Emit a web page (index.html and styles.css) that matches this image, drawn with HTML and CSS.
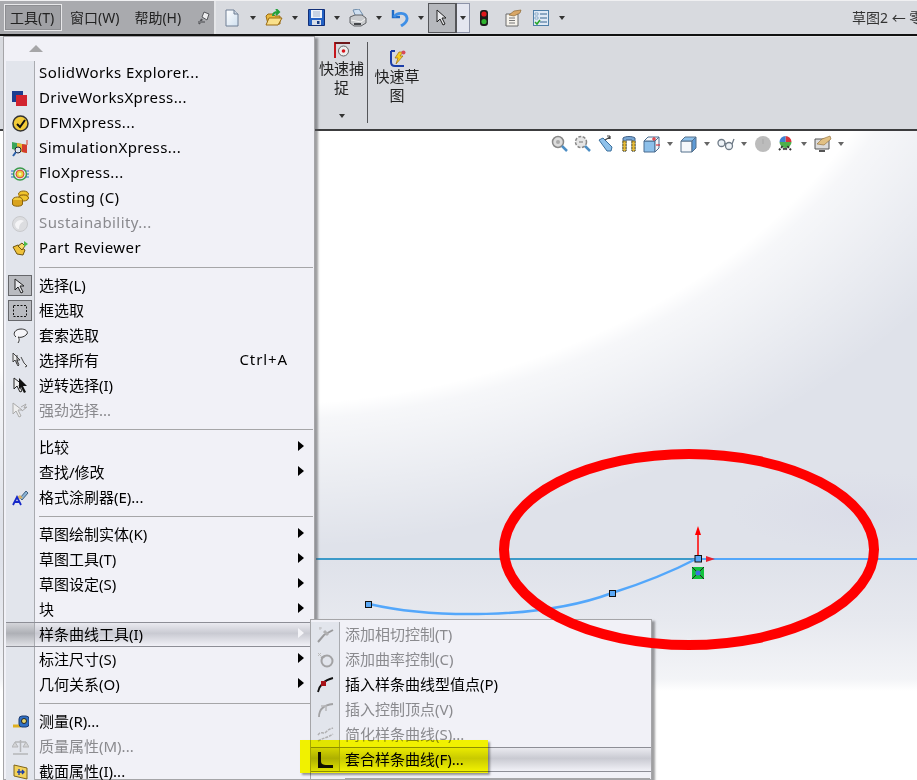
FILE: index.html
```html
<!DOCTYPE html>
<html lang="zh-CN">
<head>
  <meta charset="UTF-8" />
  <title>草图2</title>
  <link rel="stylesheet" href="styles.css">
</head>
<body>
  <div class="topbar">
    <div class="menubar">
      <span class="menu-title active">工具(T)</span>
      <span class="menu-title">窗口(W)</span>
      <span class="menu-title">帮助(H)</span>
      <svg class="pin" width="14" height="16" viewBox="0 0 14 16"><path d="M7 2l5 2-2 6-5-3z" fill="#ececee" stroke="#55565a"/><path d="M5 9L2 14" stroke="#55565a" stroke-width="2"/><path d="M1 12h7" stroke="#77787c" stroke-width="2"/></svg>
    </div>
    <div class="tools">
      <span class="tool"><svg width="16" height="18" viewBox="0 0 16 18"><defs><linearGradient id="page" x1="0" y1="0" x2="1" y2="1"><stop offset="0" stop-color="#ffffff"/><stop offset="1" stop-color="#cfe0f0"/></linearGradient></defs><path d="M2 1h8l4 4v12H2z" fill="url(#page)" stroke="#6f7f94"/><path d="M10 1v4h4" fill="#c9d3df" stroke="#6f7f94"/></svg></span>
      <span class="caret"></span>
      <span class="tool"><svg width="18" height="18" viewBox="0 0 18 18"><path d="M1 7l2-2h5l2 2h5v8H3z" fill="#e9b93f" stroke="#9a6b12"/><path d="M1 16l3-7h13l-4 7z" fill="#f9e08a" stroke="#9a6b12"/><path d="M8 7c0-3 2-4 5-4M11 0l3 3-3 3" fill="none" stroke="#22a03a" stroke-width="2"/></svg></span>
      <span class="caret"></span>
      <span class="tool"><svg width="17" height="17" viewBox="0 0 17 17"><path d="M.5.500h16v16H.5z" fill="#2462c4" stroke="#122f78"/><path d="M3 1h11v8H3z" fill="#eef3fa"/><path d="M5 3h7M5 5h7M5 7h7" stroke="#9fb3cf"/><path d="M4 11h9v5H4z" fill="#d8dee8"/><path d="M9 12h2.500v3H9z" fill="#173d86"/></svg></span>
      <span class="caret"></span>
      <span class="tool"><svg width="18" height="18" viewBox="0 0 18 18"><path d="M4 1l6-1 4 6-7 2z" fill="#cfe0f2" stroke="#6f8dab"/><path d="M1 8l5-2h7l4 3v5l-5 3H5l-4-3z" fill="#c9cbce" stroke="#5f6165"/><path d="M2 11l10 2 4-3" fill="none" stroke="#f4f4f4"/><path d="M5 15l7 0" stroke="#44464a" stroke-width="2"/></svg></span>
      <span class="caret"></span>
      <span class="tool"><svg width="18" height="18" viewBox="0 0 18 18"><path d="M2 1v7h7" fill="none" stroke="#1f6cc8" stroke-width="2.400"/><path d="M3 8c3-5 12-5 13 1 .6 4-3 6-6 8" fill="none" stroke="#3f8fe6" stroke-width="2.800"/></svg></span>
      <span class="caret"></span>
      <span class="split">
        <span class="split-main"><svg width="12" height="17" viewBox="0 0 12 17"><path d="M1 1v12l3-3 3 6 2-1-3-6h4z" fill="#e8e9ec" stroke="#222"/></svg></span>
        <span class="split-side"><span class="caret"></span></span>
      </span>
      <span class="tool light"><svg width="10" height="18" viewBox="0 0 10 18"><rect x="1" y="1" width="8" height="16" rx="3" fill="#1b1b1b"/><circle cx="5" cy="5" r="2.600" fill="#e0181c"/><circle cx="5" cy="12.500" r="2.600" fill="#2fb52f"/></svg></span>
      <span class="tool"><svg width="18" height="18" viewBox="0 0 18 18"><path d="M2 5h12v12H2z" fill="#f6f3ec" stroke="#6b6b6b"/><path d="M5 9h6M5 11.500h6M5 14h6" stroke="#777"/><path d="M5 6l5-4 7-1-1 3-6 3z" fill="#d9a766" stroke="#8d6a36" stroke-width=".7"/></svg></span>
      <span class="tool check"><svg width="16" height="16" viewBox="0 0 16 16"><rect x=".5" y=".5" width="15" height="15" fill="#dfe9f5" stroke="#4f7fa8"/><path d="M2 3h3v2H2zM2 7h3v2H2z" fill="#fff" stroke="#4f7fa8" stroke-width=".6"/><path d="M7 4h7M7 8h7M7 12h7" stroke="#37658f"/><path d="M2 12l2 2 3-4" fill="none" stroke="#24a524" stroke-width="1.500"/></svg></span>
      <span class="caret wide"></span>
    </div>
    <div class="title">草图2 ← 零件1</div>
  </div>

  <div class="ribbon">
    <div class="rb-btn">
      <svg width="16" height="17" viewBox="0 0 16 17"><path d="M1 16V1h15" fill="none" stroke="#c3161c" stroke-width="2"/><path d="M1 1h15" stroke="#1a1a1a"/><circle cx="9.500" cy="9" r="5" fill="#eee" stroke="#666"/><circle cx="9.500" cy="9" r="1.800" fill="#d8141a"/></svg>
      <span>快速捕捉</span>
      <span class="caret small"></span>
    </div>
    <div class="rb-sep"></div>
    <div class="rb-btn second">
      <svg width="17" height="17" viewBox="0 0 17 17"><path d="M2 1h4M2 1v11c0 3 2 4 4 4h9" fill="none" stroke="#1b3ea8" stroke-width="2"/><path d="M10 2l4 0-3 4h3l-7 8 2-6H6z" fill="#f6cf22" stroke="#a06d10" stroke-width=".7"/><circle cx="14.500" cy="2.500" r="2" fill="#d84a5a"/></svg>
      <span>快速草图</span>
    </div>
  </div>

  <div class="canvas">
    <div class="hud">
      <span class="hud-ico"><svg width="18" height="18" viewBox="0 0 18 18"><circle cx="7" cy="7" r="5.500" fill="#dcdcdc" stroke="#888" stroke-width="1.500"/><circle cx="7" cy="7" r="2" fill="#aaa"/><path d="M11 11l5 5" stroke="#4d8ec4" stroke-width="2.500"/></svg></span>
      <span class="hud-ico"><svg width="18" height="18" viewBox="0 0 18 18"><circle cx="7" cy="7" r="5.500" fill="#e6e6e6" stroke="#888" stroke-width="1.500" stroke-dasharray="3 1.500"/><path d="M5 7h4" stroke="#777"/><path d="M11 11l5 5" stroke="#4d8ec4" stroke-width="2.500"/></svg></span>
      <span class="hud-ico"><svg width="18" height="18" viewBox="0 0 18 18"><path d="M2 5l4-2 9 9-1 4-4 0z" fill="#8fc1ea" stroke="#3b6f9c"/><path d="M8 5l5-3M13 1l-3 0M13 1v3" fill="none" stroke="#444" stroke-width="1.200"/></svg></span>
      <span class="hud-ico"><svg width="16" height="18" viewBox="0 0 16 18"><path d="M2 3c2-2 10-2 12 0v13h-3V5H5v11H2z" fill="#78a6d4" stroke="#3f5f85"/><path d="M2 6h3v10H2zM11 6h3v10h-3z" fill="#e5bb3a" stroke="#7a6420" stroke-dasharray="2 1"/></svg></span>
      <span class="hud-ico"><svg width="17" height="18" viewBox="0 0 17 18"><path d="M1 6h11v11H1z" fill="#8dc0ea" stroke="#4a6d90"/><path d="M1 6l4-4h11l-4 4zM12 6l4-4v11l-4 4z" fill="#f4f6f9" stroke="#4a6d90"/><path d="M9 4h4M11 2v4M13 10h4" stroke="#d8141a"/></svg></span>
      <span class="caret hud-caret"></span>
      <span class="hud-ico"><svg width="17" height="18" viewBox="0 0 17 18"><path d="M1 6h11v11H1z" fill="#f4f7fb" stroke="#55708c"/><path d="M1 6l4-4h11l-4 4z" fill="#8dc0ea" stroke="#55708c"/><path d="M12 6l4-4v11l-4 4z" fill="#5d9ad6" stroke="#55708c"/></svg></span>
      <span class="caret hud-caret"></span>
      <span class="hud-ico"><svg width="18" height="14" viewBox="0 0 18 14"><circle cx="4.500" cy="6" r="3.500" fill="#eef3f8" stroke="#6e7a86" stroke-width="1.300"/><circle cx="12" cy="9" r="3.500" fill="#eef3f8" stroke="#6e7a86" stroke-width="1.300"/><path d="M7.500 6l1.500 1M15 7l2-5" stroke="#6e7a86" stroke-width="1.300" fill="none"/></svg></span>
      <span class="caret hud-caret"></span>
      <span class="hud-ico"><svg width="16" height="16" viewBox="0 0 16 16"><circle cx="8" cy="8" r="8" fill="#bcbcbc"/><path d="M8 8V3" stroke="#a8a8a8"/></svg></span>
      <span class="hud-ico"><svg width="17" height="18" viewBox="0 0 17 18"><path d="M8.500 1a6 6 0 0 1 6 6h-6z" fill="#d8343a"/><path d="M8.500 1a6 6 0 0 0-6 6h6z" fill="#3d7fd0"/><path d="M2.500 7a6 6 0 0 0 12 0z" fill="#4db04a"/><path d="M2 15l3-3 3 3 3-3 3 3" fill="none" stroke="#333" stroke-width="2" stroke-dasharray="2 1"/></svg></span>
      <span class="caret hud-caret"></span>
      <span class="hud-ico"><svg width="18" height="18" viewBox="0 0 18 18"><path d="M1 4h14v10H1z" fill="#dcdcdc" stroke="#555"/><path d="M3 9l5-5 8-3 1 3-7 6z" fill="#e1c083" stroke="#8d6a36" stroke-width=".6"/><path d="M5 16h6" stroke="#555" stroke-width="2"/></svg></span>
      <span class="caret hud-caret"></span>
    </div>
    <svg class="sketch" width="601" height="649" viewBox="316 131 601 649">
      <path d="M316 559H698" stroke="#3c9ac9" stroke-width="2" fill="none"/>
      <path d="M698 559H917" stroke="#53a7fb" stroke-width="2" fill="none"/>
      <path d="M369 604C430 618 540 620 612 593C650 581 675 570 698 558" stroke="#53a7fb" stroke-width="2.500" fill="none"/>
      <path d="M698 556V530" stroke="#f00" stroke-width="1.500"/>
      <path d="M698 526l3 9h-6z" fill="#f00"/>
      <path d="M706 556l9 3-9 3z" fill="#e8212e"/>
      <rect x="365.500" y="601.500" width="6" height="6" fill="#5aa8f5" stroke="#111"/>
      <rect x="609.500" y="590.500" width="6" height="6" fill="#5aa8f5" stroke="#111"/>
      <rect x="695" y="555.500" width="6.500" height="6.500" fill="#5aa8f5" stroke="#111"/>
      <rect x="692" y="567" width="12" height="12" fill="#12c23c"/>
      <path d="M692 579l12-12M692 567l12 12" stroke="#222"/>
      <circle cx="698" cy="573" r="2.500" fill="#3b6fe0"/>
    </svg>
  </div>

  <div class="menu">
    <div class="scroll-up"><span></span></div>
    <div class="menu-list">
      <div class="item"><span class="ico"></span><span class="label en">SolidWorks Explorer...</span></div>
      <div class="item"><span class="ico"><svg width="16" height="16" viewBox="0 0 16 16"><rect x="0" y="0" width="11" height="11" fill="#1c3d8f"/><rect x="4" y="4" width="11" height="11" fill="#d2242f"/></svg></span><span class="label en">DriveWorksXpress...</span></div>
      <div class="item"><span class="ico"><svg width="17" height="17" viewBox="0 0 17 17"><circle cx="8.500" cy="8.500" r="7.500" fill="#f2cb38" stroke="#333" stroke-width="1.500"/><path d="M5 9l3 3 5-7" fill="none" stroke="#111" stroke-width="2"/></svg></span><span class="label en">DFMXpress...</span></div>
      <div class="item"><span class="ico"><svg width="18" height="17" viewBox="0 0 18 17"><path d="M1 2l15 3v8L1 9z" fill="#3aa55a"/><path d="M6 3l10 2v8L6 11z" fill="#e9b52f"/><path d="M11 4l5 1v8l-5-1z" fill="#d43a2c"/><circle cx="7" cy="10" r="3" fill="#dfe6ee" stroke="#223"/><path d="M5 12l-3 4" stroke="#2a5fa8" stroke-width="2"/><path d="M16 0v5" stroke="#d43a2c"/></svg></span><span class="label en">SimulationXpress...</span></div>
      <div class="item"><span class="ico"><svg width="18" height="14" viewBox="0 0 18 14"><ellipse cx="9" cy="7" rx="6.500" ry="6" fill="none" stroke="#3a9a4a" stroke-width="1.500"/><ellipse cx="9" cy="7" rx="4" ry="3.800" fill="#e8d13a" stroke="#d8453a"/><circle cx="9" cy="7" r="1.500" fill="#f7f2b0"/><path d="M0 4h3M0 7h2M0 10h3M15 4h3M16 7h2M15 10h3" stroke="#2f6fc4"/></svg></span><span class="label en">FloXpress...</span></div>
      <div class="item"><span class="ico"><svg width="17" height="17" viewBox="0 0 17 17"><ellipse cx="11.500" cy="4" rx="5" ry="3" fill="#f0c52e" stroke="#8a6410"/><path d="M6.500 4v4h10V4" fill="#d9a31e"/><ellipse cx="11.500" cy="8" rx="5" ry="3" fill="#f0c52e" stroke="#8a6410"/><ellipse cx="5.500" cy="10" rx="5" ry="3" fill="#f3cf40" stroke="#8a6410"/><path d="M.5 10v4c0 3 10 3 10 0v-4" fill="#d9a31e" stroke="#8a6410"/></svg></span><span class="label en">Costing (C)</span></div>
      <div class="item off"><span class="ico"><svg width="16" height="16" viewBox="0 0 16 16"><circle cx="8" cy="8" r="7.500" fill="#dcdde0" stroke="#c8c9cc"/><path d="M3 8c2-4 6-5 9-3-2 1-5 3-5 8-2 0-4-2-4-5z" fill="#f4f4f6"/></svg></span><span class="label en">Sustainability...</span></div>
      <div class="item"><span class="ico"><svg width="17" height="17" viewBox="0 0 17 17"><path d="M1 7l5-2 7 5-2 5-6-1z" fill="#efc23a" stroke="#6d5210"/><path d="M6 6l4-3 3 3-3 4z" fill="#f7da6a" stroke="#6d5210"/><path d="M12 1l4 3-4 3z" fill="#4cbb4c"/></svg></span><span class="label en">Part Reviewer</span></div>
      <div class="sep"></div>
      <div class="item"><span class="ico"><span class="pressed"><svg width="12" height="16" viewBox="0 0 12 16"><path d="M1 1v11l3-3 3 6 2-1-3-6h4z" fill="#e8e9ec" stroke="#222"/></svg></span></span><span class="label">选择(L)</span></div>
      <div class="item"><span class="ico"><span class="pressed"><svg width="16" height="14" viewBox="0 0 16 14"><rect x="1.500" y="1.500" width="13" height="11" fill="none" stroke="#111" stroke-dasharray="2 1.500"/></svg></span></span><span class="label">框选取</span></div>
      <div class="item"><span class="ico"><svg width="17" height="17" viewBox="0 0 17 17"><path d="M4 10C0 7 3 2 9 2s8 4 5 6c-2 2-6 3-8 2 1 1 2 3 0 6" fill="#f5f5f8" stroke="#333"/></svg></span><span class="label">套索选取</span></div>
      <div class="item"><span class="ico"><svg width="16" height="17" viewBox="0 0 16 17"><path d="M1 1v9l2-2 3 6 1-1-2-5h3zM5 3v9M9 5l3 6 3 3-2 1" fill="#eee" stroke="#333" stroke-width=".9"/></svg></span><span class="label">选择所有</span><span class="key">Ctrl+A</span></div>
      <div class="item"><span class="ico"><svg width="15" height="17" viewBox="0 0 15 17"><path d="M1 1v11l3-3 3 6 2-1-3-6h4z" fill="#eee" stroke="#222"/><path d="M6 1l8 8h-4l3 6-2 1-3-6-2 2z" fill="#111"/></svg></span><span class="label">逆转选择(I)</span></div>
      <div class="item off"><span class="ico"><svg width="16" height="17" viewBox="0 0 16 17"><path d="M1 1v11l3-3 3 6 2-1-3-6h4z" fill="#eee" stroke="#aaa"/><path d="M9 5l5-3-2 4 3-1-5 4" fill="none" stroke="#aaa"/></svg></span><span class="label">强劲选择...</span></div>
      <div class="sep"></div>
      <div class="item"><span class="ico"></span><span class="label">比较</span><span class="arrow"></span></div>
      <div class="item"><span class="ico"></span><span class="label">查找/修改</span><span class="arrow"></span></div>
      <div class="item"><span class="ico"><svg width="17" height="17" viewBox="0 0 17 17"><path d="M8 9l6-7 2 2-6 7z" fill="#8ab3d6" stroke="#44627f"/><path d="M7 10l-2-2 3-2 3 3z" fill="#d8b36a"/><path d="M1 16l4-8 4 8M3 13h4" fill="none" stroke="#1628c8" stroke-width="1.800"/></svg></span><span class="label">格式涂刷器(E)...</span></div>
      <div class="sep"></div>
      <div class="item"><span class="ico"></span><span class="label">草图绘制实体(K)</span><span class="arrow"></span></div>
      <div class="item"><span class="ico"></span><span class="label">草图工具(T)</span><span class="arrow"></span></div>
      <div class="item"><span class="ico"></span><span class="label">草图设定(S)</span><span class="arrow"></span></div>
      <div class="item"><span class="ico"></span><span class="label">块</span><span class="arrow"></span></div>
      <div class="item hot"><span class="ico"></span><span class="label">样条曲线工具(I)</span><span class="arrow"></span></div>
      <div class="item"><span class="ico"></span><span class="label">标注尺寸(S)</span><span class="arrow"></span></div>
      <div class="item"><span class="ico"></span><span class="label">几何关系(O)</span><span class="arrow"></span></div>
      <div class="sep"></div>
      <div class="item"><span class="ico"><svg width="17" height="14" viewBox="0 0 17 14"><path d="M1 11h8" stroke="#e0b020" stroke-width="3"/><rect x="7" y="1" width="10" height="11" rx="3" fill="#2f6fc4" stroke="#1a3a70"/><circle cx="12" cy="6" r="2.500" fill="#e8d66a" stroke="#222"/></svg></span><span class="label">测量(R)...</span></div>
      <div class="item off"><span class="ico"><svg width="17" height="16" viewBox="0 0 17 16"><path d="M8.500 1v12M3 3h11M1 15h15" stroke="#b5b6b8" stroke-width="1.500"/><path d="M0 8l3-5 3 5zM11 8l3-5 3 5z" fill="#d3d4d6" stroke="#b5b6b8"/></svg></span><span class="label">质量属性(M)...</span></div>
      <div class="item"><span class="ico"><svg width="15" height="16" viewBox="0 0 15 16"><path d="M1 1l13 3v11L1 12z" fill="#f2d25a" stroke="#80651a"/><path d="M4 8h7M9 6l2 2-2 2M6 5v6" fill="none" stroke="#1b3ea8" stroke-width="1.300"/></svg></span><span class="label">截面属性(I)...</span></div>
    </div>
  </div>

  <div class="menu submenu">
    <div class="item off"><span class="ico"><svg width="17" height="17" viewBox="0 0 17 17"><path d="M1 16l6-7 9-5" fill="none" stroke="#9a9a9c" stroke-width="2"/><path d="M7 5l4 4" stroke="#b0b0b2" stroke-width="3"/><path d="M2 2h3M3 1v3" stroke="#c0c0c2"/></svg></span><span class="label">添加相切控制(T)</span></div>
    <div class="item off"><span class="ico"><svg width="17" height="17" viewBox="0 0 17 17"><circle cx="10" cy="10" r="5.500" fill="none" stroke="#a2a2a4" stroke-width="2"/><path d="M1 2l3 3M4 2L1 5" stroke="#bbb"/><path d="M4 7l4-2" stroke="#a2a2a4" stroke-width="2"/></svg></span><span class="label">添加曲率控制(C)</span></div>
    <div class="item"><span class="ico"><svg width="17" height="17" viewBox="0 0 17 17"><path d="M1 16c1-6 6-12 15-14" fill="none" stroke="#111" stroke-width="1.800"/><rect x="4" y="5" width="5" height="5" fill="#a8141a"/></svg></span><span class="label">插入样条曲线型值点(P)</span></div>
    <div class="item off"><span class="ico"><svg width="17" height="17" viewBox="0 0 17 17"><path d="M2 16c0-7 4-12 14-13" fill="none" stroke="#a2a2a4" stroke-width="1.800"/><path d="M4 5h5v5" fill="none" stroke="#b8b8ba" stroke-width="1.500"/></svg></span><span class="label">插入控制顶点(V)</span></div>
    <div class="item off"><span class="ico"><svg width="17" height="15" viewBox="0 0 17 15"><path d="M1 8c3-5 5 0 8-3s4-3 7-4M1 14c5-3 9-3 15-7" fill="none" stroke="#b0b0b2" stroke-width="1.500" stroke-dasharray="3 1"/></svg></span><span class="label">简化样条曲线(S)...</span></div>
    <div class="item hot"><span class="ico"><svg width="16" height="16" viewBox="0 0 16 16"><path d="M1 0h3v9c0 3 2 4 5 4h7v3H1z" fill="#111"/></svg></span><span class="label">套合样条曲线(F)...</span></div>
    <div class="sub-sep"></div>
  </div>

  <div class="marker"></div>
  <svg class="ring" width="400" height="220" viewBox="489 440 400 220"><ellipse cx="689" cy="549.500" rx="185" ry="95.500" fill="none" stroke="#f00" stroke-width="10"/></svg>
</body>
</html>
```

FILE: styles.css
```css
* {
  box-sizing: border-box;
}
html, body {
  height: 100%;
}
body {
  margin: 0;
  overflow: hidden;
  display: flex;
  flex-direction: column;
  background: #fff;
  color: #000;
  font-family: "Noto Sans", "Noto Sans CJK SC", sans-serif;
  font-size: 15px;
}
svg {
  display: block;
}

/* top row */
.topbar {
  flex: none;
  height: 36px;
  display: flex;
  background: #d8dadf;
  border-top: 1px solid #f0f0f2;
  border-bottom: 2px solid #111;
  white-space: nowrap;
}
.menubar {
  flex: none;
  width: 216px;
  display: flex;
  align-items: center;
  padding-left: 4px;
  background: #a9aaae;
  border-right: 2px solid #e4e5e8;
}
.menu-title {
  height: 27px;
  line-height: 25px;
  padding: 0 4px;
  margin-left: 3px;
  color: #222;
  font-size: 14px;
  border: 1px solid transparent;
}
.menu-title.active {
  width: 58px;
  margin-left: 0;
  padding: 0 5px;
  border-color: #e8e8ea;
  outline: 1px solid #8d8e92;
  outline-offset: -2px;
  background: #a0a1a5;
}
.menu-title + .menu-title + .menu-title {
  margin-left: 5px;
}
.pin {
  margin-left: 11px;
}
.tools {
  flex: none;
  display: flex;
  align-items: center;
}
.tool {
  flex: none;
  width: 32px;
  display: flex;
  justify-content: center;
}
.tool.light {
  width: 26px;
  margin-left: 1px;
}
.tool.check {
  width: 24px;
}
.caret {
  flex: none;
  width: 10px;
  height: 4px;
  position: relative;
}
.caret::after {
  content: "";
  position: absolute;
  left: 2px;
  top: 0;
  border: 3px solid transparent;
  border-top: 4px solid #333;
  border-bottom: 0;
}
.caret.wide {
  width: 18px;
}
.caret.wide::after {
  left: 6px;
}
.split {
  flex: none;
  display: flex;
  height: 30px;
  margin-left: 2px;
}
.split-main {
  width: 29px;
  display: flex;
  align-items: center;
  justify-content: center;
  background: #b6b8bd;
  border: 1px solid #55565a;
  border-width: 1px 2px 1px 1px;
}
.split-side {
  width: 13px;
  display: flex;
  align-items: center;
  justify-content: center;
  background: #e4e6f0;
  border: 1px solid #8d93a8;
  border-left: 0;
}
.split-side .caret {
  width: 8px;
}
.split-side .caret::after {
  left: 1px;
}
.title {
  flex: none;
  margin-left: 281px;
  line-height: 33px;
  font-size: 14px;
  color: #333;
}

/* command band */
.ribbon {
  flex: none;
  height: 95px;
  display: flex;
  padding: 5px 0 0 318px;
  background: #d8dadf;
  border-bottom: 2px solid #3c3c3e;
  border-top: 1px solid #e6e7ea;
}
.rb-btn {
  width: 47px;
  display: flex;
  flex-direction: column;
  align-items: center;
  text-align: center;
  line-height: 19px;
  color: #222;
}
.rb-btn .caret.small {
  margin-top: 17px;
  width: 8px;
}
.rb-btn .caret.small::after {
  left: 1px;
}
.rb-btn.second {
  margin-left: 4px;
  padding-top: 8px;
  width: 50px;
}
.rb-sep {
  width: 1px;
  height: 81px;
  margin-left: 2px;
  background: #55565a;
}

/* graphics area */
.canvas {
  flex: 1;
  position: relative;
  background:
    radial-gradient(ellipse 700px 535px at 250px -250px, #fff 98%, rgba(255, 255, 255, .72) 101%, rgba(255, 255, 255, 0) 125%),
    radial-gradient(ellipse 130px 40px at 860px 380px, #dbdde8, rgba(219, 221, 232, 0)),
    linear-gradient(#dfe2ea 430px, #e7e9ef 490px, #f3f4f7 548px, #fff 560px);
}
.hud {
  display: flex;
  align-items: center;
  height: 26px;
  padding-left: 548px;
}
.hud-ico {
  flex: none;
  width: 23px;
  display: flex;
  justify-content: center;
}
.hud-caret {
  width: 14px;
}
.hud-caret::after {
  left: 4px;
  border-top-color: #666;
}
.sketch {
  position: absolute;
  left: 316px;
  top: 0;
}

/* drop-down menu */
.menu {
  position: absolute;
  left: 3px;
  top: 36px;
  width: 312px;
  height: 744px;
  background: #f1f1f7;
  border: 1px solid #a5a5a8;
  box-shadow: 3px 2px 2px rgba(80, 80, 84, .55);
}
.scroll-up {
  height: 24px;
  padding: 8px 0 0 25px;
}
.scroll-up span {
  display: block;
  width: 0;
  border: 7px solid transparent;
  border-bottom: 7px solid #a6a6a8;
  border-top: 0;
}
.menu-list {
  margin-left: 2px;
}
.item {
  height: 25px;
  display: flex;
  align-items: center;
  white-space: nowrap;
}
.ico {
  flex: none;
  align-self: stretch;
  width: 29px;
  margin-right: 4px;
  display: flex;
  align-items: center;
  justify-content: center;
  background: #e2e5ec;
  border-right: 1px solid #a9abb0;
}
.pressed {
  width: 24px;
  height: 21px;
  display: flex;
  align-items: center;
  justify-content: center;
  background: #b9bbc0;
  border: 1px solid #66676b;
}
.label {
  flex: 1;
  padding-bottom: 3px;
}
.label.en {
  letter-spacing: .42px;
}
.item.off {
  color: #8a8a8e;
}
.arrow {
  flex: none;
  margin: 0 10px 4px 0;
  border: 5px solid transparent;
  border-left: 6px solid #000;
  border-right: 0;
}
.key {
  flex: none;
  margin-right: 26px;
  padding-bottom: 3px;
  letter-spacing: .9px;
}
.sep {
  height: 12px;
  margin-right: 1px;
  background:
    linear-gradient(#a6a6a8, #a6a6a8) 33px 6px / 100% 1px no-repeat,
    linear-gradient(to right, #e2e5ec 28px, #a9abb0 28px, #a9abb0 29px, transparent 29px);
}
.item.hot {
  border-top: 1px solid #8d8e96;
  border-bottom: 1px solid #8d8e96;
  background: linear-gradient(#eaeaf0, #c9cad2 45%, #f1f1f7);
}
.item.hot .ico {
  background: linear-gradient(#d4d5da, #aeb0b6 45%, #e0e1e6);
}
.item.hot .arrow {
  border-left-color: #f4f4f8;
}
.submenu {
  left: 310px;
  top: 619px;
  width: 342px;
  height: 161px;
  padding-top: 2px;
  z-index: 1;
}
.submenu .ico {
  margin-right: 5px;
}
.sub-sep {
  height: 1px;
  margin: 6px 1px 0 34px;
  background: #a6a6a8;
}
.marker {
  position: absolute;
  left: 300px;
  top: 740px;
  width: 188px;
  height: 33px;
  z-index: 2;
  background: #ff0;
  mix-blend-mode: multiply;
  box-shadow: 2px 2px 2px rgba(90, 90, 90, .6);
}
.ring {
  position: absolute;
  left: 489px;
  top: 440px;
  z-index: 3;
}
```
